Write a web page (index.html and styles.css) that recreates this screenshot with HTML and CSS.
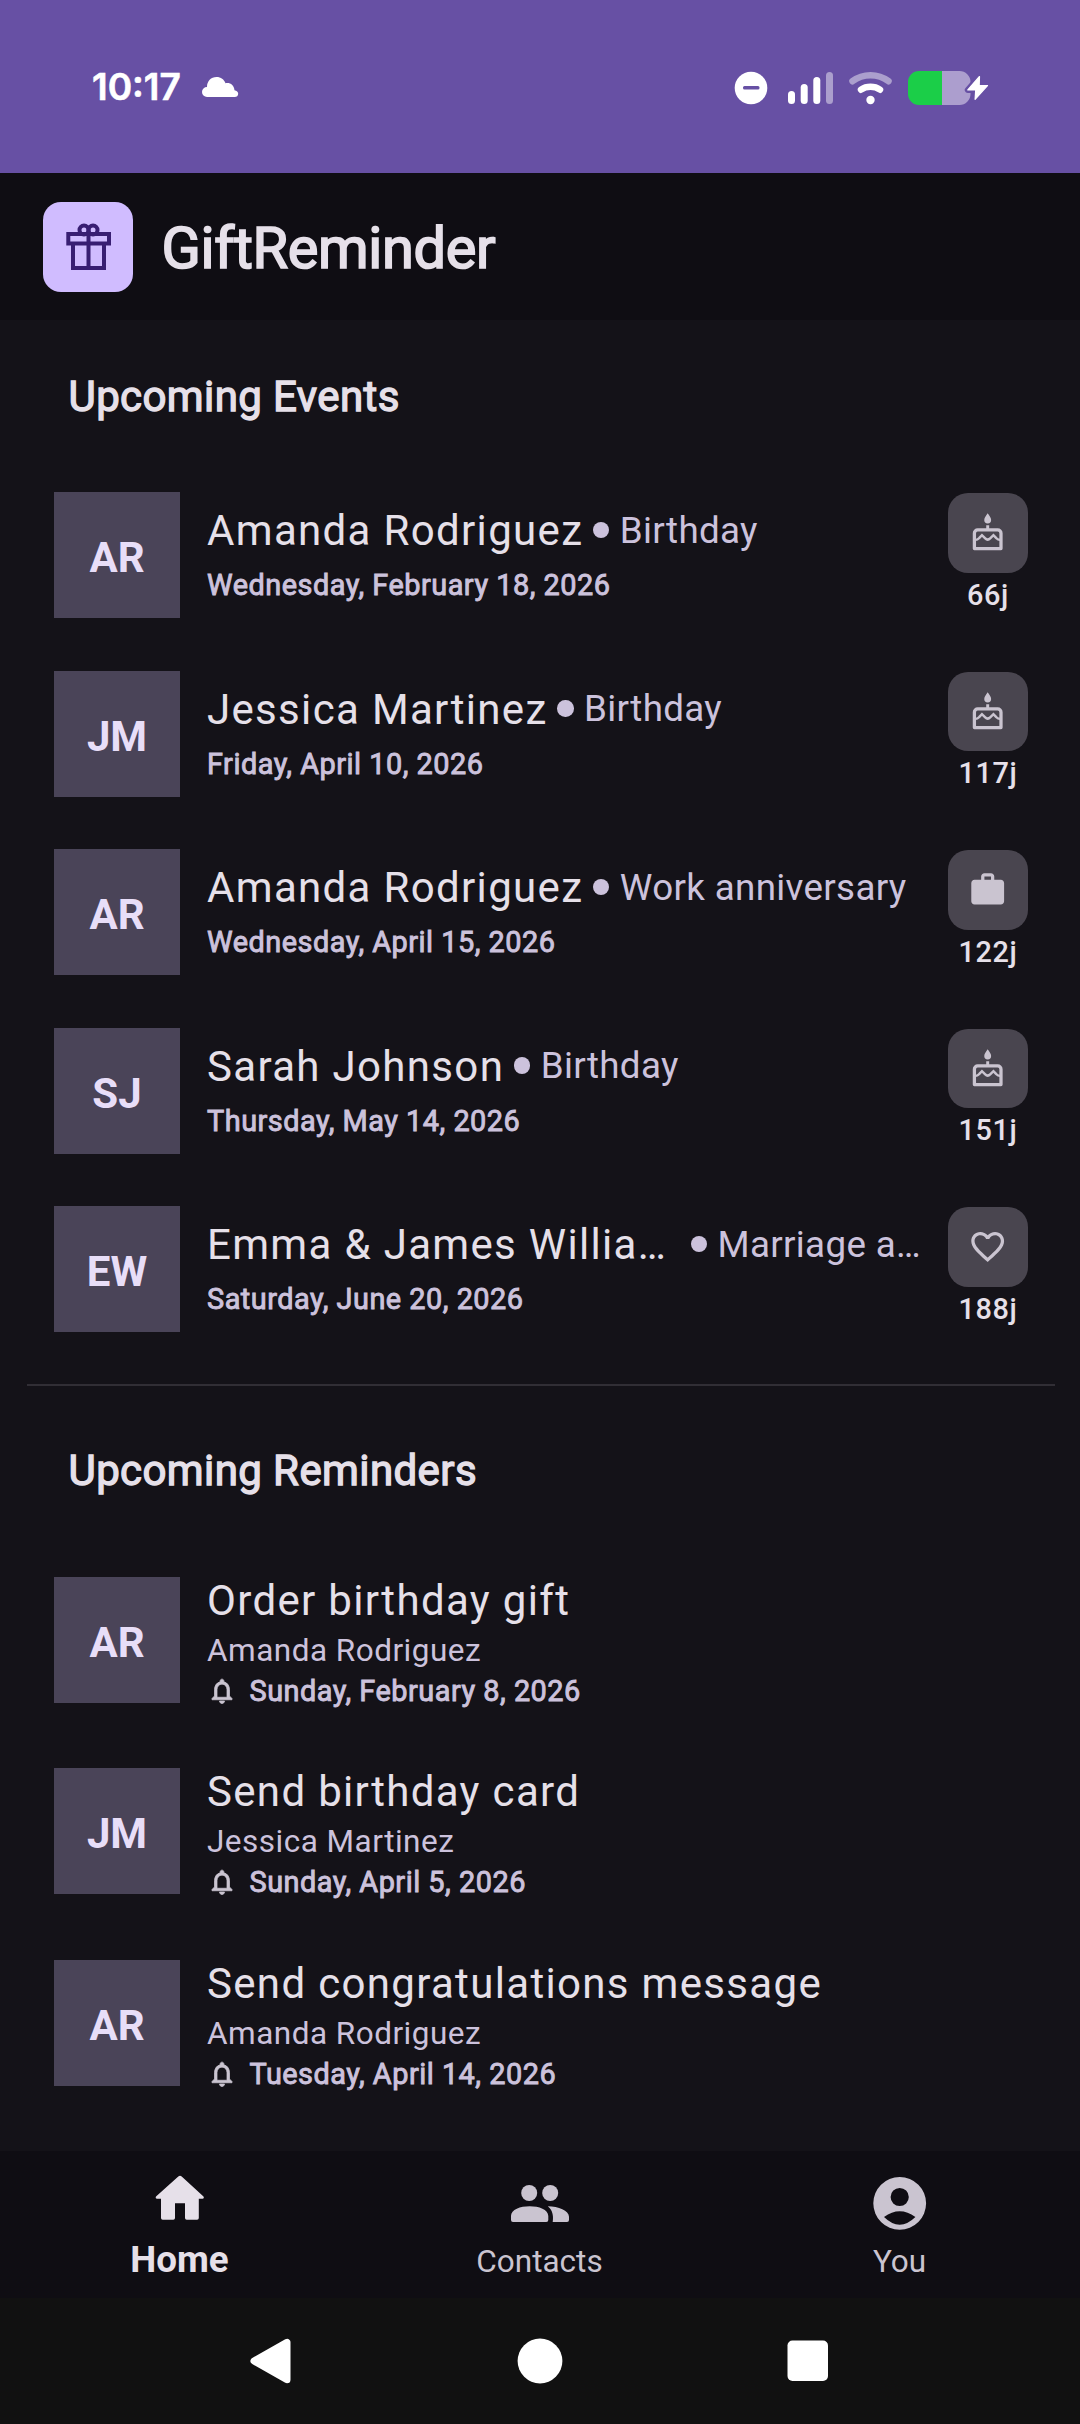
FILE: index.html
```html
<!DOCTYPE html>
<html lang="en">
<head>
<meta charset="utf-8">
<title>GiftReminder</title>
<link rel="stylesheet" href="styles.css">
</head>
<body>
<svg class="sprite" aria-hidden="true">
  <symbol id="cake" viewBox="0 0 24 24">
    <path d="M12 0.2c1 1.5 2.1 2.8 2.1 4.1a2.1 2.1 0 0 1-4.2 0C9.900 3 11 1.700 12 0.200zM11.100 7.400h1.800v2.400h-1.800z" fill="currentColor"/>
    <path d="M3.900 21.700V12.300a2 2 0 0 1 2-2h12.200a2 2 0 0 1 2 2v9.400z" fill="none" stroke="currentColor" stroke-width="2" stroke-linejoin="round"/>
    <path d="M4 16.400c1.700 0 2.300-.5 2.900-1.200L8.500 13.500l2 2c1 1 2 1 3 0l2-2 1.600 1.700c.6.700 1.200 1.200 2.900 1.200" fill="none" stroke="currentColor" stroke-width="1.500"/>
  </symbol>
  <symbol id="work" viewBox="0 0 24 24">
    <path fill="currentColor" d="M20 6h-4V4c0-1.110-.89-2-2-2h-4c-1.110 0-2 .89-2 2v2H4c-1.110 0-2 .89-2 2v11c0 1.110.89 2 2 2h16c1.110 0 2-.89 2-2V8c0-1.110-.89-2-2-2zm-6 0h-4V4h4v2z"/>
  </symbol>
  <symbol id="heart" viewBox="0 0 24 24">
    <path fill="currentColor" d="M16.500 3c-1.740 0-3.410.81-4.500 2.090C10.910 3.810 9.240 3 7.500 3 4.420 3 2 5.420 2 8.500c0 3.780 3.400 6.860 8.550 11.540L12 21.350l1.450-1.320C18.600 15.360 22 12.280 22 8.500 22 5.420 19.580 3 16.500 3zm-4.400 15.550l-.1.100-.1-.1C7.140 14.240 4 11.390 4 8.500 4 6.500 5.500 5 7.500 5c1.540 0 3.040.99 3.570 2.360h1.870C13.460 5.990 14.960 5 16.500 5c2 0 3.500 1.500 3.500 3.500 0 2.890-3.140 5.740-7.900 10.050z"/>
  </symbol>
  <symbol id="bell" viewBox="0 0 24 24">
    <path fill="currentColor" stroke="currentColor" stroke-width=".6" d="M12 22c1.100 0 2-.9 2-2h-4c0 1.100.9 2 2 2zm6-6v-5c0-3.070-1.630-5.640-4.500-6.320V4c0-.83-.67-1.500-1.500-1.500s-1.500.67-1.500 1.500v.68C7.640 5.360 6 7.920 6 11v5l-2 2v1h16v-1l-2-2zm-2 1H8v-6c0-2.480 1.510-4.500 4-4.500s4 2.020 4 4.500v6z"/>
  </symbol>
</svg>

<header class="status">
  <div class="status-left">
    <span class="clock">10:17</span>
    <svg class="cloud" width="37" height="20" viewBox="0 0 37 20"><path fill="#fff" d="M5 20a5 5 0 0 1 0-10C5 4 9 0 14.500 0c4.500 0 7.500 2.500 9 6.200 5-.8 8.500 2 9 7 2.200.3 3.700 1.700 3.700 3.500 0 2-1.500 3.300-3.500 3.300z"/></svg>
  </div>
  <svg class="status-icons" width="256" height="36" viewBox="734 70 256 36">
    <circle cx="751" cy="88" r="16.300" fill="#fff"/>
    <rect x="743" y="86" width="16.500" height="3.600" rx="1.500" fill="#6750a4"/>
    <g fill="#fff">
      <rect x="788" y="91" width="7" height="13" rx="3.500"/>
      <rect x="800.700" y="84" width="7" height="20" rx="3.500"/>
      <rect x="813.300" y="77" width="7" height="27" rx="3.500"/>
      <rect x="826" y="72" width="7" height="32" rx="3.500" opacity=".45"/>
    </g>
    <g fill="none" stroke="#fff" stroke-width="6.500" stroke-linecap="round">
      <path d="M852.500 81.200c10.500-8 25.500-8 36 0" opacity=".45"/>
      <path d="M861 89.700c5.500-3.800 13.500-3.800 19 0"/>
    </g>
    <circle cx="870.500" cy="100" r="4.200" fill="#fff"/>
    <path d="M942 71h17.500a11 11 0 0 1 11 11v12a11 11 0 0 1-11 11H942z" fill="#ac9ece"/>
    <path d="M942 71H919a11 11 0 0 0-11 11v12a11 11 0 0 0 11 11h23z" fill="#1bce48"/>
    <path d="M979.500 76.500L967.800 90h7.900l-1 9.500L987.500 85.500h-8.700z" fill="#6750a4" stroke="#6750a4" stroke-width="6" stroke-linejoin="round"/>
    <path d="M979.500 76.500L967.800 90h7.900l-.6 9.300L987.500 85.500h-8.300z" fill="#fff" stroke="#fff" stroke-width="1.200" stroke-linejoin="round"/>
  </svg>
</header>

<div class="appbar">
  <div class="logo">
    <svg width="46" height="48" viewBox="0 0 46 48" fill="none" stroke="#381e72" stroke-width="4">
      <rect x="2.300" y="11" width="40.700" height="9.500"/>
      <path d="M7 20.500V45h31V20.500M22.500 9V45"/>
      <circle cx="18" cy="7" r="4.500"/><circle cx="27" cy="7" r="4.500"/>
    </svg>
  </div>
  <h1>GiftReminder</h1>
</div>

<main>
  <h2>Upcoming Events</h2>
  <ul>
    <li class="event">
      <div class="avatar">AR</div>
      <div class="info">
        <div class="line"><span class="name">Amanda Rodriguez</span><i class="dot"></i><span class="kind">Birthday</span></div>
        <div class="date">Wednesday, February 18, 2026</div>
      </div>
      <div class="countdown"><div class="tile"><svg><use href="#cake"/></svg></div><span>66j</span></div>
    </li>
    <li class="event">
      <div class="avatar">JM</div>
      <div class="info">
        <div class="line"><span class="name">Jessica Martinez</span><i class="dot"></i><span class="kind">Birthday</span></div>
        <div class="date">Friday, April 10, 2026</div>
      </div>
      <div class="countdown"><div class="tile"><svg><use href="#cake"/></svg></div><span>117j</span></div>
    </li>
    <li class="event">
      <div class="avatar">AR</div>
      <div class="info">
        <div class="line"><span class="name">Amanda Rodriguez</span><i class="dot"></i><span class="kind">Work anniversary</span></div>
        <div class="date">Wednesday, April 15, 2026</div>
      </div>
      <div class="countdown"><div class="tile"><svg><use href="#work"/></svg></div><span>122j</span></div>
    </li>
    <li class="event">
      <div class="avatar">SJ</div>
      <div class="info">
        <div class="line"><span class="name">Sarah Johnson</span><i class="dot"></i><span class="kind">Birthday</span></div>
        <div class="date">Thursday, May 14, 2026</div>
      </div>
      <div class="countdown"><div class="tile"><svg><use href="#cake"/></svg></div><span>151j</span></div>
    </li>
    <li class="event">
      <div class="avatar">EW</div>
      <div class="info">
        <div class="line"><span class="name clipped">Emma &amp; James Willia…</span><i class="dot"></i><span class="kind">Marriage a…</span></div>
        <div class="date">Saturday, June 20, 2026</div>
      </div>
      <div class="countdown"><div class="tile"><svg><use href="#heart"/></svg></div><span>188j</span></div>
    </li>
  </ul>
  <hr>
  <h2>Upcoming Reminders</h2>
  <ul>
    <li class="reminder">
      <div class="avatar">AR</div>
      <div class="info">
        <div class="name">Order birthday gift</div>
        <div class="person">Amanda Rodriguez</div>
        <div class="when"><svg><use href="#bell"/></svg><span>Sunday, February 8, 2026</span></div>
      </div>
    </li>
    <li class="reminder">
      <div class="avatar">JM</div>
      <div class="info">
        <div class="name">Send birthday card</div>
        <div class="person">Jessica Martinez</div>
        <div class="when"><svg><use href="#bell"/></svg><span>Sunday, April 5, 2026</span></div>
      </div>
    </li>
    <li class="reminder">
      <div class="avatar">AR</div>
      <div class="info">
        <div class="name">Send congratulations message</div>
        <div class="person">Amanda Rodriguez</div>
        <div class="when"><svg><use href="#bell"/></svg><span>Tuesday, April 14, 2026</span></div>
      </div>
    </li>
  </ul>
</main>

<nav class="tabs">
  <a class="tab active">
    <svg width="60" height="60" viewBox="150 2168 60 60"><path fill="currentColor" d="M178.300 2176.500q1.700-1.500 3.400 0L203.500 2196.500q1 2-1 2.200H198.800V2218q0 1.700-1.700 1.700H186.700q-1.700 0-1.700-1.700V2203.300H175V2218q0 1.700-1.700 1.700H162.700q-1.700 0-1.700-1.700V2198.700H157q-2-.2-1-2.200z"/></svg>
    <span>Home</span>
  </a>
  <a class="tab">
    <svg width="60" height="60" viewBox="510 2173 60 60" fill="currentColor">
      <circle cx="529.200" cy="2193" r="8"/><circle cx="550.200" cy="2193" r="8"/>
      <path d="M511 2216c0-13 37.300-13 37.300 0v4q0 2-2 2H513q-2 0-2-2zM547.800 2206.200c10.500.3 21.200 4 21.200 10.500v3.300q0 2-2 2H552.700c.8-5 .5-11.500-4.900-15.800z"/>
    </svg>
    <span>Contacts</span>
  </a>
  <a class="tab">
    <svg width="60" height="60" viewBox="870 2173 60 60"><path fill="currentColor" fill-rule="evenodd" d="M899.700 2176.900a26.400 26.400 0 1 1 0 52.800a26.400 26.400 0 1 1 0-52.800zm0 11a9.100 9.100 0 1 0 0 18.200a9.100 9.100 0 1 0 0-18.200zM884 2217q15.700 15.400 31.400 0-15.700-11.400-31.400 0z"/></svg>
    <span>You</span>
  </a>
</nav>

<footer class="sysnav">
  <svg width="42" height="46" viewBox="0 0 42 46"><path d="M4 23L37 4.300V41.700z" fill="#fff" stroke="#fff" stroke-width="7" stroke-linejoin="round"/></svg>
  <svg width="46" height="46" viewBox="0 0 46 46"><circle cx="23" cy="23" r="22.400" fill="#fff"/></svg>
  <svg width="42" height="42" viewBox="0 0 42 42"><rect x=".5" y=".5" width="40.500" height="40.500" rx="5" fill="#fff"/></svg>
</footer>
</body>
</html>
```
FILE: styles.css
```css
* { box-sizing: border-box; }

body {
  margin: 0;
  width: 1080px;
  height: 2424px;
  overflow: hidden;
  display: flex;
  flex-direction: column;
  background: #141218;
  color: #e6e0e9;
  font-family: Roboto, "Open Sans", sans-serif;
}

svg { display: block; flex: none; }
.sprite { display: none; }
ul { list-style: none; margin: 0; padding: 0; }

.status {
  flex: none;
  height: 173px;
  padding: 0 90px 0 92px;
  display: flex;
  justify-content: space-between;
  background: #6750a4;
}
.status-left { display: flex; align-items: flex-start; }
.clock {
  width: 110px;
  padding-top: 64px;
  font: 600 37px/46px Inter, sans-serif;
  color: #fff;
  -webkit-text-stroke: 0.6px #fff;
}
.cloud { margin-top: 77px; }
.status-icons { margin-top: 70px; }

.appbar {
  flex: none;
  height: 147px;
  padding-left: 43px;
  display: flex;
  align-items: center;
  gap: 28.500px;
  background: #0f0d13;
}
.logo {
  width: 90px;
  height: 90px;
  border-radius: 18px;
  background: #d0bcff;
  display: flex;
  align-items: center;
  justify-content: center;
}
.logo svg { margin-left: 1px; }
h1 {
  margin: 3px 0 0;
  font-size: 57.75px;
  font-weight: 400;
  line-height: 70px;
  letter-spacing: -0.350px;
  -webkit-text-stroke: 1.700px;
}

main { flex: none; height: 1831px; }
h2 {
  margin: 0;
  padding: 52px 0 44px 68.500px;
  font-size: 42px;
  font-weight: 400;
  line-height: 50px;
  letter-spacing: 0.400px;
  -webkit-text-stroke: 1.300px;
}
hr {
  margin: 25px 25px 8px 27px;
  height: 2px;
  border: 0;
  background: #312e35;
}

.event, .reminder { display: flex; padding-left: 54px; }
.event { height: 178.500px; padding-top: 26px; }
.reminder { height: 191.500px; padding-top: 37px; }

.avatar {
  flex: none;
  width: 126px;
  height: 126px;
  padding-top: 3px;
  background: #4a4458;
  color: #e8def8;
  font-size: 42px;
  font-weight: 700;
  line-height: 126px;
  text-align: center;
}
.info { width: 720px; margin-left: 27px; }
.line { display: flex; align-items: center; height: 60px; margin-top: 9px; white-space: nowrap; }
.name { font-size: 42px; line-height: 60px; letter-spacing: 1.330px; }
.clipped { width: 474px; }
.dot { width: 16.500px; height: 16.500px; margin: 0 10.500px 2px 9.500px; border-radius: 50%; background: #ccc2dc; }
.kind { margin-bottom: 2px; font-size: 36.750px; letter-spacing: 0.340px; color: #ccc2dc; }
.date, .when { font-size: 28.875px; letter-spacing: 0.510px; color: #ccc2dc; -webkit-text-stroke: 0.900px; }
.date { line-height: 40px; margin-top: 4px; }

.countdown {
  width: 80px;
  margin: 1px 0 0 21px;
  display: flex;
  flex-direction: column;
  align-items: center;
  font-size: 28.875px;
  font-weight: 500;
  line-height: 45px;
  letter-spacing: 0.600px;
}
.tile {
  width: 79.500px;
  height: 79.500px;
  border-radius: 20px;
  background: #49454f;
  color: #cac4d0;
  display: flex;
  align-items: center;
  justify-content: center;
}
.tile svg { width: 39.400px; height: 39.400px; }

.reminder .info { margin-top: -6px; }
.person { font-size: 31.500px; line-height: 39px; letter-spacing: 0.490px; color: #ccc2dc; }
.when { display: flex; align-items: center; height: 42px; }
.when svg { width: 30px; height: 30px; margin-right: 12.500px; color: #cac4d0; }

.tabs { flex: none; height: 147px; display: flex; background: #0f0d13; }
.tab {
  flex: 1;
  padding-top: 22px;
  display: flex;
  flex-direction: column;
  align-items: center;
  color: #cac4d0;
  font-size: 31.500px;
  line-height: 44px;
}
.tab span { margin: 7px 1px 0 0; }
.tab.active { padding-top: 17px; color: #e6e0e9; font-size: 36.750px; font-weight: 700; }
.tab.active span { margin-top: 10px; }

.sysnav {
  flex: none;
  height: 126px;
  padding: 0 251px 0 250px;
  display: flex;
  align-items: center;
  justify-content: space-between;
  background: #111;
}
```
